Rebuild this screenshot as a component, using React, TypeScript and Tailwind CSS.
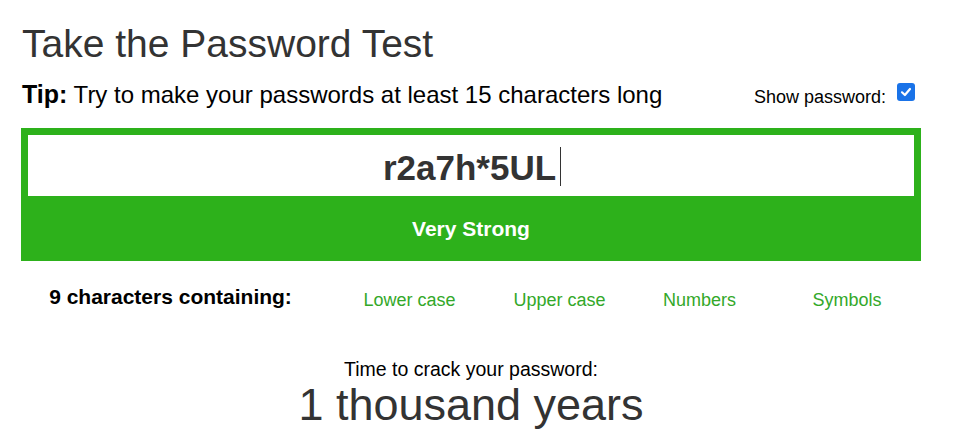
import React from "react";

export default function App() {
  return (
    <div className="min-h-[443px] bg-white" style={{ fontFamily: '"Liberation Sans", Arial, sans-serif' }}>
      <div className="ml-[21px] w-[900px] pt-[21px]">
        <h1 className="text-[39px] leading-[45px] font-normal text-[#333] pl-[1px]">Take the Password Test</h1>

        <div className="mt-[14px] flex items-baseline justify-between h-[28px]">
          <p className="text-[24px] leading-[28px] text-black pl-[1px]">
            <span className="font-bold text-[25px]">Tip:</span> Try to make your passwords at least 15 characters long
          </p>
          <label className="flex items-baseline text-[18px] leading-[22px] text-black mr-[6px]">
            <span>Show password:</span>
            <span className="ml-[11px] relative top-[-5px] inline-flex h-[18px] w-[18px] items-center justify-center rounded-[3px] bg-[#1a73e8]">
              <svg width="12" height="12" viewBox="0 0 12 12" fill="none">
                <path d="M2 6.3 L4.9 9 L10 3" stroke="white" strokeWidth="2.2" strokeLinecap="round" strokeLinejoin="round" />
              </svg>
            </span>
          </label>
        </div>

        <div className="mt-[20px] bg-[#2db11b] px-[7px] pt-[7px]">
          <div className="flex h-[61px] items-center justify-center bg-white">
            <span className="text-[35px] leading-[40px] font-bold text-[#333] pt-[4px] pl-[2px]">r2a7h*5UL</span>
            <span className="ml-[4px] h-[39px] w-[1px] bg-[#333] mt-[2px]" />
          </div>
          <div className="flex h-[65px] items-center justify-center text-[21px] font-bold text-white">Very Strong</div>
        </div>

        <div className="mt-[20px] grid grid-cols-[299px_179px_121px_159px_136px] items-baseline">
          <div className="text-center text-[21px] font-bold text-black">9 characters containing:</div>
          <div className="text-center text-[18px] text-[#33a829] relative top-[2px]">Lower case</div>
          <div className="text-center text-[18px] text-[#33a829] relative top-[2px]">Upper case</div>
          <div className="text-center text-[18px] text-[#33a829] relative top-[2px]">Numbers</div>
          <div className="text-center text-[18px] text-[#33a829] relative top-[2px]">Symbols</div>
        </div>

        <div className="mt-[45px] text-center">
          <div className="text-[19.5px] leading-[22px] text-black">Time to crack your password:</div>
          <div className="text-[45px] leading-[50px] text-[#333]">1 thousand years</div>
        </div>
      </div>
    </div>
  );
}
